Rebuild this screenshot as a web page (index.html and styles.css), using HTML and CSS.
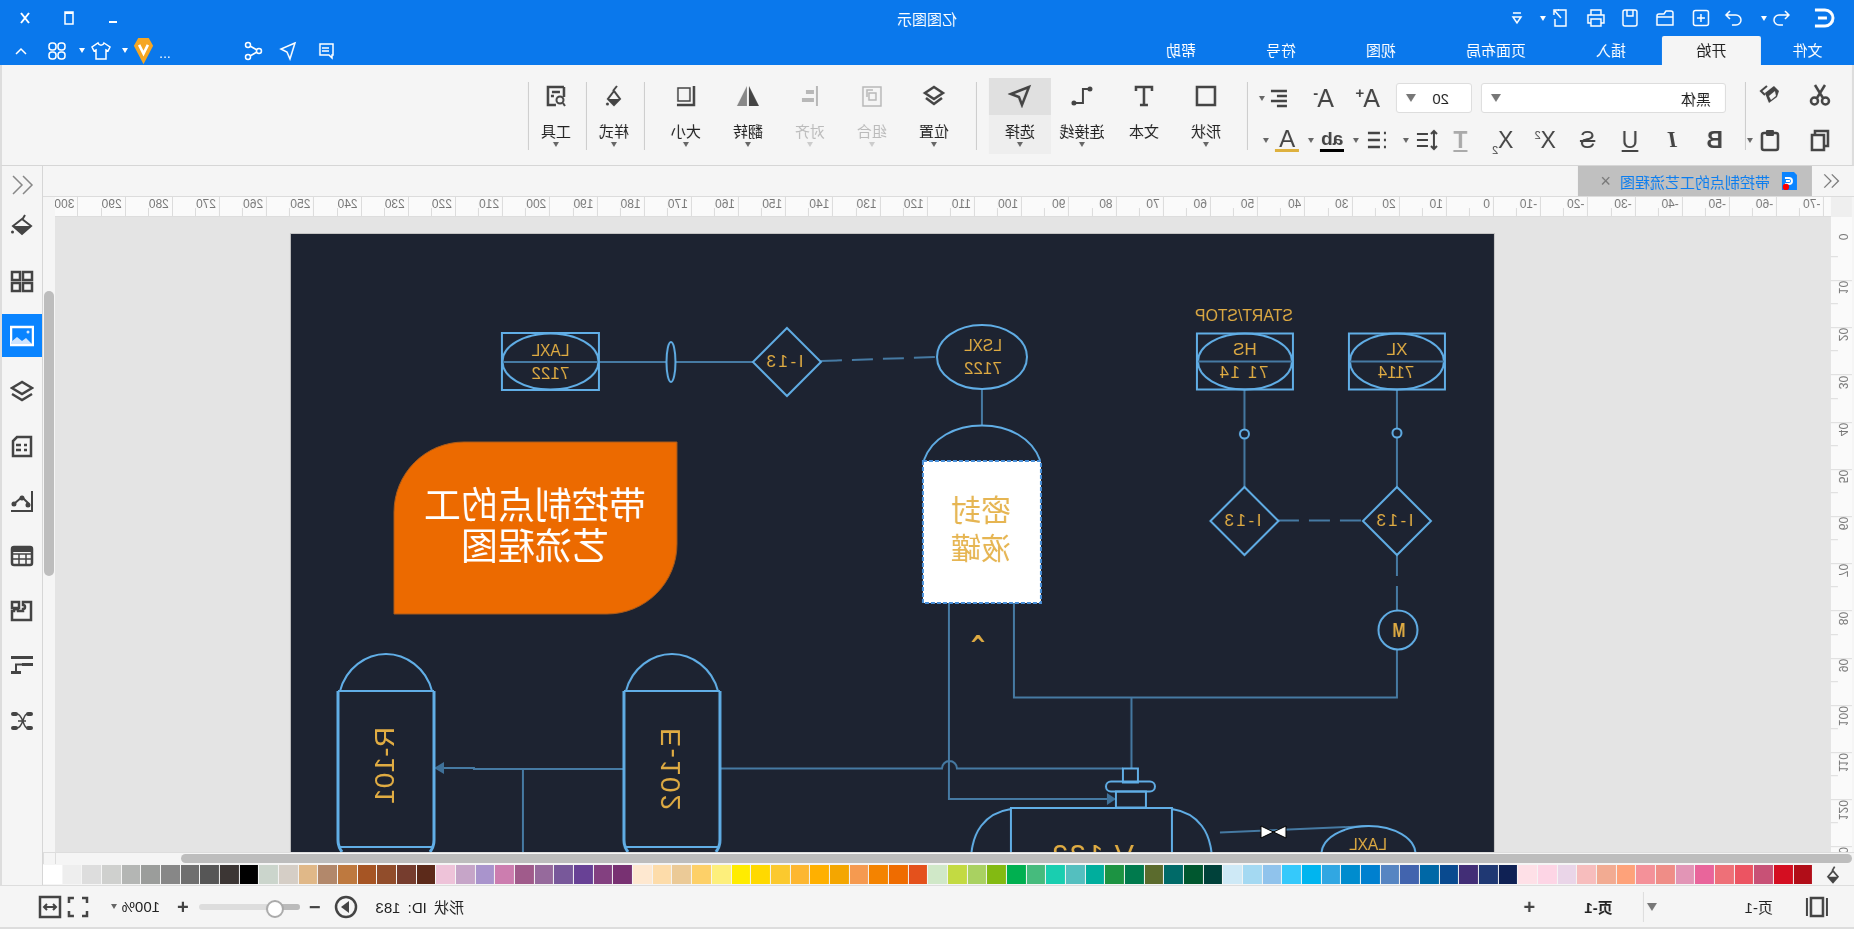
FILE: index.html
```html
<!DOCTYPE html>
<html lang="zh">
<head>
<meta charset="utf-8">
<title>亿图图示</title>
<link rel="stylesheet" href="styles.css">
</head>
<body>
<div class="app">
  <header class="titlebar">
    <div class="quick">
      <svg class="q24" viewBox="0 0 24 24"><path class="s w3" d="M21 4H11a8 8 0 0 0 0 16h10"/><path class="s w3" d="M9 12h9"/></svg>
      <svg class="q20" viewBox="0 0 20 20"><path class="s" d="M6 3L2 7l4 4M2 7h10a5 5 0 0 1 0 10H8"/></svg>
      <i class="caret light"></i>
      <b></b>
      <svg class="q20" viewBox="0 0 20 20"><path class="s" d="M14 3l4 4-4 4M18 7H8a5 5 0 0 0 0 10h4"/></svg>
      <svg class="q20" viewBox="0 0 20 20"><rect class="s" x="2.5" y="2.5" width="15" height="15" rx="2"/><path class="s" d="M10 6v8M6 10h8"/></svg>
      <svg class="q20" viewBox="0 0 20 20"><path class="s" d="M2 17V5a2 2 0 0 1 2-2h5l2 3h5a2 2 0 0 1 2 2v9z"/><path class="s" d="M2 9h16"/></svg>
      <svg class="q20" viewBox="0 0 20 20"><rect class="s" x="3" y="2" width="14" height="16" rx="2"/><path class="s" d="M7 2v6h6V2"/></svg>
      <svg class="q20" viewBox="0 0 20 20"><path class="s" d="M5 7V2h10v5M5 15H2V7h16v8h-3"/><rect class="s" x="5" y="11" width="10" height="7"/></svg>
      <svg class="q20" viewBox="0 0 20 20"><path class="s" d="M12 2H4v16h11v-7"/><path class="s" d="M9 10l6-7M11 2h5v5"/></svg>
      <i class="caret light"></i>
      <svg class="q14" viewBox="0 0 14 14"><path class="s" d="M3 2h8M3 6l4 6 4-6z"/></svg>
    </div>
    <div class="apptitle">亿图图示</div>
    <div class="winctl">
      <svg class="q14" viewBox="0 0 14 14"><path class="s w2" d="M3 11h8"/></svg>
      <svg class="q14" viewBox="0 0 14 14"><rect class="s" x="3" y="1" width="8" height="12"/><path class="s w2" d="M3 2h8"/></svg>
      <svg class="q14" viewBox="0 0 14 14"><path class="s w2" d="M3 2l8 10M11 2L3 12"/></svg>
    </div>
  </header>

  <nav class="tabbar">
    <span class="tab first">文件</span>
    <span class="tab active">开始</span>
    <span class="tab">插入</span>
    <span class="tab">页面布局</span>
    <span class="tab">视图</span>
    <span class="tab">符号</span>
    <span class="tab">帮助</span>
    <div class="tabtools">
      <svg class="q20" viewBox="0 0 20 20"><path class="s" d="M3 3h13v11H7l-3 3v-3H3zM7 7h7M7 10h7"/></svg>
      <svg class="q20" viewBox="0 0 20 20"><path class="s" d="M3 2l14 6-6 3-3 7z"/></svg>
      <svg class="q20" viewBox="0 0 20 20"><circle class="s" cx="4" cy="10" r="2.5"/><circle class="s" cx="15" cy="4" r="2.5"/><circle class="s" cx="15" cy="16" r="2.5"/><path class="s" d="M6 9l7-4M6 11l7 4"/></svg>
      <b></b>
      <span class="dots">...</span>
      <svg class="badge" viewBox="0 0 22 32"><path class="gold" d="M5 1h12l5 9-11 21L0 10z"/><path class="s w3" d="M6 9l5 10 5-10"/></svg>
      <i class="caret light"></i>
      <svg class="q20" viewBox="0 0 20 20"><path class="s" d="M7 2L1 6l2 4 2-1v9h10V9l2 1 2-4-6-4c-1 3-5 3-6 0z"/></svg>
      <i class="caret light"></i>
      <svg class="q20" viewBox="0 0 20 20"><rect class="s" x="2" y="2" width="7" height="7" rx="3"/><rect class="s" x="11" y="2" width="7" height="7" rx="3"/><rect class="s" x="2" y="11" width="7" height="7" rx="3"/><rect class="s" x="11" y="11" width="7" height="7" rx="3"/></svg>
      <svg class="q14" viewBox="0 0 14 14"><path class="s" d="M2 10l5-5 5 5"/></svg>
    </div>
  </nav>

  <section class="ribbon">
    <div class="clip">
      <svg class="ic" viewBox="0 0 24 24"><circle class="s w25" cx="6.500" cy="18" r="3.500"/><circle class="s w25" cx="17.500" cy="18" r="3.500"/><path class="s w25" d="M9 15L17 2M15 15L7 2"/></svg>
      <svg class="ic" viewBox="0 0 24 24"><path class="f" d="M8 3L17 10 13 20 5 14 3 8z"/><path class="s w2" d="M15 3l6 5-4 4"/><path class="clearf" d="M7 8l6 5-2 4-5-4z"/></svg>
      <svg class="ic" viewBox="0 0 24 24"><rect class="s w25" x="4" y="3" width="13" height="15"/><rect class="s w25 paperfill" x="8" y="7" width="12" height="15"/></svg>
      <div class="pastewrap">
        <svg class="ic" viewBox="0 0 24 24"><rect class="s w25" x="4" y="5" width="16" height="17" rx="2"/><rect class="f" x="8" y="2" width="8" height="6" rx="1"/></svg>
        <i class="caret"></i>
      </div>
    </div>
    <i class="sep"></i>
    <div class="fontgrp">
      <div class="frow1">
        <div class="select fname"><span>黑体</span><i class="caret big"></i></div>
        <div class="select fsize"><span>20</span><i class="caret big"></i></div>
        <span class="glyph aplus">A<sup>+</sup></span>
        <span class="glyph aminus">A<sup>-</sup></span>
        <svg class="ic alignic" viewBox="0 0 24 24"><path class="s w25" d="M4 5h16M4 10h10M4 15h16M4 20h10"/></svg>
        <i class="caret gapc"></i>
      </div>
      <div class="frow2">
        <span class="rb b">B</span>
        <span class="rb it">I</span>
        <span class="rb u">U</span>
        <span class="rb st">S</span>
        <span class="rb sc">X<sup>2</sup></span>
        <span class="rb sc">X<sub>2</sub></span>
        <span class="rb dis">T</span>
        <div class="rc w50"><svg class="ic" viewBox="0 0 24 24"><path class="s w2" d="M5 3v18M2 6l3-3 3 3M2 18l3 3 3-3M11 6h11M11 12h11M11 18h11"/></svg><i class="caret"></i></div>
        <div class="rc w45"><svg class="ic" viewBox="0 0 24 24"><path class="s w25" d="M9 5h12M9 12h12M9 19h12M3 5h2M3 12h2M3 19h2"/></svg><i class="caret"></i></div>
        <div class="rc w45"><span class="ab">ab</span><i class="caret"></i></div>
        <div class="rc w43"><span class="acol">A</span><i class="caret"></i></div>
      </div>
    </div>
    <i class="sep"></i>
    <div class="bbs lead">
      <div class="bb"><svg class="ic" viewBox="0 0 24 24"><rect class="s w25" x="3" y="3" width="18" height="18"/></svg><span>形状</span><i class="caret"></i></div>
      <div class="bb"><svg class="ic" viewBox="0 0 24 24"><path class="s w25" d="M4 7V3h16v4M12 3v18M8 21h8"/></svg><span>文本</span><i class="caret none"></i></div>
      <div class="bb"><svg class="ic" viewBox="0 0 24 24"><path class="s w2" d="M4 5h7v14h9"/><circle class="f" cx="4" cy="5" r="2.5"/><circle class="f" cx="20" cy="19" r="2.5"/></svg><span>连接线</span><i class="caret"></i></div>
      <div class="bb on"><svg class="ic" viewBox="0 0 24 24"><path class="s w25" d="M3 3l18 7-8 3-3 8z"/></svg><span>选择</span><i class="caret"></i></div>
    </div>
    <i class="sep sepwide"></i>
    <div class="bbs">
      <div class="bb"><svg class="ic" viewBox="0 0 24 24"><path class="s w25" d="M12 3l9 6-9 6-9-6zM4 14l8 6 8-6"/></svg><span>位置</span><i class="caret"></i></div>
      <div class="bb off"><svg class="ic" viewBox="0 0 24 24"><rect class="s" x="3" y="3" width="18" height="19"/><path class="s" d="M8 9h7v7H8zM11 6h6v7"/></svg><span>组合</span><i class="caret"></i></div>
      <div class="bb off"><svg class="ic" viewBox="0 0 24 24"><path class="s w2" d="M5 2v20"/><path class="f" d="M8 6h8v4H8zM8 14h12v4H8z"/></svg><span>对齐</span><i class="caret"></i></div>
      <div class="bb"><svg class="ic" viewBox="0 0 24 24"><path class="f" d="M11 2v20H1z"/><path class="f lite" d="M13 2v20h10z"/></svg><span>翻转</span><i class="caret"></i></div>
      <div class="bb"><svg class="ic" viewBox="0 0 24 24"><path class="s w25" d="M4 2v19h17"/><rect class="s" x="8" y="4" width="12" height="13"/></svg><span>大小</span><i class="caret"></i></div>
    </div>
    <i class="sep sepl"></i>
    <div class="bb narrow"><svg class="ic" viewBox="0 0 24 24"><path class="s w2" d="M9 2l4 5M12 7l6 8-6 6-6-6z"/><path class="f" d="M6 15h12l-6 6z"/><circle class="f" cx="18.500" cy="20" r="1.500"/></svg><span>样式</span><i class="caret"></i></div>
    <i class="sep"></i>
    <div class="bb narrow"><svg class="ic" viewBox="0 0 24 24"><path class="s w25" d="M4 3h16v18H12M4 3v10M8 8h8M14 12h3"/><circle class="s w2" cx="8" cy="16" r="3.500"/><path class="s w2" d="M5 19l-2 3"/></svg><span>工具</span><i class="caret"></i></div>
    <i class="sep"></i>
  </section>

  <div class="mainrow">
    <div class="content">
      <div class="docbar">
        <svg class="chev" viewBox="0 0 24 24"><path class="s" d="M11 4l-8 8 8 8M20 4l-8 8 8 8"/></svg>
        <div class="doctab">
          <svg class="docicon" viewBox="0 0 15 18"><path class="blue" d="M3 0h12v18H0V3z"/><path class="s w2 wht" d="M12 6H8a3 3 0 0 0 0 6h4M7 9h4"/><circle class="red" cx="11" cy="15" r="3.200"/></svg>
          <span class="docname">带控制点的工艺流程图</span>
          <span class="docx">×</span>
        </div>
      </div>

      <div class="rulerrow">
        <div class="corner"></div>
        <div class="hruler">
          <span>-70</span><span>-60</span><span>-50</span><span>-40</span><span>-30</span><span>-20</span><span>-10</span><span>0</span><span>10</span><span>20</span><span>30</span><span>40</span><span>50</span><span>60</span><span>70</span><span>80</span><span>90</span><span>100</span><span>110</span><span>120</span><span>130</span><span>140</span><span>150</span><span>160</span><span>170</span><span>180</span><span>190</span><span>200</span><span>210</span><span>220</span><span>230</span><span>240</span><span>250</span><span>260</span><span>270</span><span>280</span><span>290</span><span>300</span>
        </div>
        <div class="rulerend"></div>
      </div>

      <div class="canvasrow">
        <div class="vruler">
          <span>0</span><span>10</span><span>20</span><span>30</span><span>40</span><span>50</span><span>60</span><span>70</span><span>80</span><span>90</span><span>100</span><span>110</span><span>120</span><span>130</span>
        </div>
        <div class="canvas">
          <svg class="page" width="1203" height="640" viewBox="0 0 1203 640">
            <rect width="1203" height="640" class="pagebg"/>
            <g transform="matrix(-1 0 0 1 1494 -234)">
              <path class="ln" d="M599 362H667M676 362H754M982 389V425M1244.500 389V429M1244.500 439V487M1397 389V428M1397 438V487M1397 555V576M1397 586V610M1397 650V697.500H1014V603M949 603V799H1108M1131.500 697V768M443 768H474V769H624M523 769V860M720.500 768.500H942A7.500 7.500 0 0 1 957 768.500H1123M1220 832.500L1370 826"/>
              <path class="ln" d="M821 361L937 357" stroke-dasharray="21 10"/>
              <path class="ln" d="M1278 520.500H1363" stroke-dasharray="21 10"/>
              <path class="head" d="M434 768L444 762V774ZM1116 799L1107 793V805Z"/>

              <path class="sh" d="M502 333h97v57h-97z"/>
              <ellipse class="sh" cx="550.500" cy="361.500" rx="48" ry="28"/>
              <path class="ln" d="M503 362H598"/>
              <ellipse class="sh" cx="671" cy="362" rx="4.500" ry="20"/>
              <path class="sh" d="M787 328L821 362L787 396L753 362Z"/>
              <ellipse class="sh" cx="982" cy="357" rx="45" ry="32"/>
              <path class="sh" d="M924 460C932 438 955 425.500 982 425.500S1032 438 1040 460"/>
              <path class="orange" d="M677 442V544A70 70 0 0 1 607 614H394V512A70 70 0 0 1 464 442Z"/>
              <rect class="sel" x="923" y="461" width="118" height="142"/>

              <rect class="sh" x="1197" y="333.500" width="96" height="56"/>
              <ellipse class="sh" cx="1245" cy="361.500" rx="47" ry="28"/>
              <path class="ln" d="M1198 361.500H1292"/>
              <rect class="sh" x="1349" y="333.500" width="96" height="56"/>
              <ellipse class="sh" cx="1397" cy="361.500" rx="47" ry="28"/>
              <path class="ln" d="M1350 361.500H1444"/>
              <circle class="sh" cx="1244.500" cy="434" r="4.500"/>
              <circle class="sh" cx="1397" cy="433" r="4.500"/>
              <path class="sh" d="M1244.500 487L1278.500 521L1244.500 555L1210.500 521Z"/>
              <path class="sh" d="M1397 487L1431 521L1397 555L1363 521Z"/>
              <circle class="sh" cx="1398" cy="630" r="19.500"/>

              <path class="sh" d="M340 691C346 668 366 654 386 654S426 668 432 691"/>
              <path class="sh2" d="M338 691V840Q338 847 342 852M434 691V840Q434 847 430 852"/>
              <path class="sh" d="M338 691H434M340 847H432"/>
              <path class="sh" d="M626 691C632 668 652 654 672 654S712 668 718 691"/>
              <path class="sh2" d="M624 691V840Q624 847 628 852M720 691V840Q720 847 716 852"/>
              <path class="sh" d="M624 691H720M626 847H718"/>

              <rect class="sh" x="1123" y="768.500" width="15" height="14"/>
              <rect class="sh" x="1106" y="781.500" width="49" height="10" rx="5"/>
              <rect class="sh" x="1116" y="791.500" width="30" height="16"/>
              <path class="sh" d="M1011 880V808H1172V880M1011 809C985 813 971 832 971 862M1172 809C1198 813 1212 832 1212 862"/>
              <ellipse class="sh" cx="1368.500" cy="854" rx="47" ry="28"/>
              <path class="tie" d="M1261 826L1286 838V826L1261 838Z"/>
            </g>
            <g transform="translate(0 -234)">
              <text class="t" x="943.500" y="356" textLength="38" lengthAdjust="spacingAndGlyphs">LAXL</text>
              <text class="t" x="943.500" y="379">7122</text>
              <text class="t" x="709" y="367" textLength="37">I-13</text>
              <text class="t" x="511" y="351" textLength="38" lengthAdjust="spacingAndGlyphs">LSXL</text>
              <text class="t" x="511" y="374">7122</text>
              <text class="t" x="250" y="321" textLength="98" lengthAdjust="spacingAndGlyphs">START/STOP</text>
              <text class="t" x="249" y="355">HS</text>
              <text class="t" x="250" y="378" textLength="49">71 14</text>
              <text class="t" x="97" y="355">XL</text>
              <text class="t" x="98" y="378">7114</text>
              <text class="t" x="251" y="526" textLength="37">I-13</text>
              <text class="t" x="99" y="526" textLength="37">I-13</text>
              <text class="t m" x="95" y="637" textLength="13" lengthAdjust="spacingAndGlyphs">M</text>
              <text class="cgl" x="516" y="653">^</text>
              <text class="t big" x="401" y="865" textLength="82">V-132</text>
              <text class="t" x="126" y="850" textLength="38" lengthAdjust="spacingAndGlyphs">LAXL</text>
              <text class="t vert" transform="translate(1110 765.500) rotate(90)" dy=".36em" textLength="77">R-101</text>
              <text class="t vert" transform="translate(824 769) rotate(90)" dy=".36em" textLength="82">E-102</text>
              <text class="cn tank" x="513" y="521">密封</text>
              <text class="cn tank" x="513" y="559">液罐</text>
              <text class="cn head1" x="959" y="519">带控制点的工</text>
              <text class="cn head1" x="959" y="560">艺流程图</text>
            </g>
          </svg>
        </div>
        <div class="vscroll"><div class="vthumb"></div></div>
      </div>

      <div class="hscrollrow">
        <div class="htrack"><div class="hthumb"></div></div>
        <div class="hbox"></div>
      </div>

      <div class="palrow">
        <svg class="palicon" viewBox="0 0 24 24"><path class="s w2" d="M10 2l3 5M12 7l6 7-6 7-6-7z"/><path class="f" d="M6 14h12l-6 7z"/></svg>
        <div class="swatches">
          <i style="background:#ffffff"></i><i style="background:#eeeeee"></i><i style="background:#dddddd"></i><i style="background:#cfd0ce"></i><i style="background:#b4b6b4"></i><i style="background:#9b9d9b"></i><i style="background:#878787"></i><i style="background:#6f6f6f"></i><i style="background:#565656"></i><i style="background:#3c3634"></i><i style="background:#000000"></i><i style="background:#cbd5cc"></i><i style="background:#d5cec6"></i><i style="background:#e0b888"></i><i style="background:#b2886b"></i><i style="background:#be793f"></i><i style="background:#a65524"></i><i style="background:#914d2b"></i><i style="background:#763d2e"></i><i style="background:#5c2a1a"></i><i style="background:#eec3d9"></i><i style="background:#c6a5c8"></i><i style="background:#a994cc"></i><i style="background:#cc7daf"></i><i style="background:#a05b8b"></i><i style="background:#966a9c"></i><i style="background:#78589a"></i><i style="background:#684195"></i><i style="background:#834080"></i><i style="background:#783172"></i><i style="background:#fee8d0"></i><i style="background:#fddcaa"></i><i style="background:#ebca97"></i><i style="background:#fdd068"></i><i style="background:#fdef7c"></i><i style="background:#ffec00"></i><i style="background:#ffd900"></i><i style="background:#fbc92e"></i><i style="background:#fdb731"></i><i style="background:#ffb000"></i><i style="background:#f4a600"></i><i style="background:#f59a50"></i><i style="background:#f48300"></i><i style="background:#ef6c00"></i><i style="background:#e4511c"></i><i style="background:#d0e8c8"></i><i style="background:#c3da42"></i><i style="background:#a9d161"></i><i style="background:#83ba12"></i><i style="background:#00b050"></i><i style="background:#46bb7d"></i><i style="background:#19ceb0"></i><i style="background:#54bfbf"></i><i style="background:#00ae9d"></i><i style="background:#1c9342"></i><i style="background:#007a4d"></i><i style="background:#5b6b2d"></i><i style="background:#006a68"></i><i style="background:#00572f"></i><i style="background:#00413a"></i><i style="background:#cee9f6"></i><i style="background:#a4d9f2"></i><i style="background:#90c3ec"></i><i style="background:#35c9fb"></i><i style="background:#00b5ef"></i><i style="background:#31a7e2"></i><i style="background:#008cce"></i><i style="background:#0080cf"></i><i style="background:#5685c2"></i><i style="background:#4264ae"></i><i style="background:#0068a6"></i><i style="background:#094a8f"></i><i style="background:#422e76"></i><i style="background:#1f3873"></i><i style="background:#0f2154"></i><i style="background:#fee0e7"></i><i style="background:#fdd5e5"></i><i style="background:#ead5e8"></i><i style="background:#f7bdbd"></i><i style="background:#f2ab92"></i><i style="background:#fea27a"></i><i style="background:#f49199"></i><i style="background:#ef8d87"></i><i style="background:#e295b6"></i><i style="background:#e9659b"></i><i style="background:#ee7078"></i><i style="background:#ec5462"></i><i style="background:#c85176"></i><i style="background:#d40e21"></i><i style="background:#b10d18"></i>
        </div>
      </div>
    </div>

    <aside class="sidebar">
      <svg class="sidechev" viewBox="0 0 24 24"><path class="s" d="M11 3l-9 9 9 9M21 3l-9 9 9 9"/></svg>
      <div class="sb"><svg class="ic" viewBox="0 0 24 24"><path class="s w2" d="M9 1l3 5M12 5l9 7-9 8-9-8z"/><path class="f" d="M3 12h18l-9 8z"/><circle class="f" cx="21.500" cy="18" r="1.500"/></svg></div>
      <div class="sb"><svg class="ic" viewBox="0 0 24 24"><rect class="s w25" x="2" y="3" width="9" height="8"/><rect class="s w25" x="14" y="3" width="8" height="8"/><rect class="s w25" x="2" y="14" width="9" height="8"/><rect class="s w25" x="14" y="14" width="8" height="8"/></svg></div>
      <div class="sb act"><svg class="ic" viewBox="0 0 24 24"><rect class="s w25 wht" x="1" y="3" width="22" height="18"/><path class="wfill" d="M2 20l6-6 4 3 5-4 6 5v2z"/><circle class="wfill" cx="6" cy="8" r="1.500"/></svg></div>
      <div class="sb"><svg class="ic" viewBox="0 0 24 24"><path class="s w25" d="M12 3l10 6-10 6L2 9zM2 15l10 6 10-6"/></svg></div>
      <div class="sb"><svg class="ic" viewBox="0 0 24 24"><path class="s w25" d="M3 3h14l4 4v15H3zM7 11h3M13 11h5M7 16h3M13 16h5"/></svg></div>
      <div class="sb"><svg class="ic" viewBox="0 0 24 24"><path class="s w2" d="M2 2v20h21M5 15l7-7 7 6"/><circle class="f" cx="6" cy="16" r="2.500"/><circle class="f" cx="12" cy="9" r="2.500"/><circle class="f" cx="20" cy="15" r="2.500"/></svg></div>
      <div class="sb"><svg class="ic" viewBox="0 0 24 24"><rect class="s w25" x="2" y="3" width="20" height="18" rx="2"/><path class="f" d="M3 3h18v5H3z"/><path class="s" d="M2 10h20M2 15h20M8 10v11M15 10v11"/></svg></div>
      <div class="sb"><svg class="ic" viewBox="0 0 24 24"><path class="s w25" d="M3 3h8v3a2 2 0 0 0 0 4v2h5a2 2 0 0 1 4 0h2v9H3zM15 3h7v6h-7z"/></svg></div>
      <div class="sb"><svg class="ic" viewBox="0 0 24 24"><path class="f" d="M1 2h22v3H1zM1 9h11v3H1zM13 17h10v3H13z"/><path class="s w2" d="M11 10.500H18V18"/></svg></div>
      <div class="sb"><svg class="ic" viewBox="0 0 24 24"><rect class="f" x="1" y="3" width="7" height="4" rx="2"/><rect class="f" x="16" y="3" width="7" height="4" rx="2"/><rect class="f" x="1" y="17" width="7" height="4" rx="2"/><rect class="f" x="16" y="17" width="7" height="4" rx="2"/><path class="s" d="M7 5c4 0 4 14 10 14M17 5c-6 0-6 14-10 14M8 12h8"/></svg></div>
    </aside>
  </div>

  <footer class="status">
    <svg class="ic pageic" viewBox="0 0 24 24"><path class="s w2" d="M2 3v18M22 3v18"/><rect class="s w25" x="6" y="3" width="12" height="18"/></svg>
    <span class="pg">页-1</span>
    <i class="caret big pgcaret"></i>
    <i class="pgsep"></i>
    <span class="pg bold">页-1</span>
    <span class="plus first">+</span>
    <div class="statright">
      <span class="shapeid">形状 ID: 183</span>
      <svg class="ic play" viewBox="0 0 24 24"><circle class="s w25" cx="12" cy="12" r="10"/><path class="f" d="M9 6l8 6-8 6z"/></svg>
      <span class="plus minus">−</span>
      <div class="slider"><div class="fill"></div></div>
      <span class="plus">+</span>
      <span class="zoom">100%</span>
      <i class="caret"></i>
      <svg class="ic full" viewBox="0 0 24 24"><path class="s w25" d="M3 8V3h5M16 3h5v5M21 16v5h-5M8 21H3v-5"/></svg>
      <svg class="ic fit" viewBox="0 0 24 24"><rect class="s w25" x="2" y="2" width="20" height="20"/><path class="s w2" d="M6 12h12M9 9l-3 3 3 3M15 9l3 3-3 3"/></svg>
    </div>
  </footer>
  <div class="footline"></div>
</div>
</body>
</html>
```

FILE: styles.css
```css
* { box-sizing: border-box; }
html, body { margin: 0; height: 100%; overflow: hidden; background: #f5f5f5; }
body { font-family: "Liberation Sans", "Noto Sans CJK SC", sans-serif; font-size: 15px; color: #222; }
i { display: block; font-style: normal; }

.app { width: 1854px; height: 929px; display: flex; flex-direction: column; transform: scaleX(-1); overflow: hidden; }

/* shared icon primitives */
.s { fill: none; stroke: currentColor; stroke-width: 1.5; }
.f { fill: currentColor; }
.w2 { stroke-width: 2; }
.w25 { stroke-width: 2.5; }
.w3 { stroke-width: 3; }
.wht { color: #fff; }
.paperfill { fill: #f5f5f5; }
.ic { width: 24px; height: 24px; color: #444; display: block; flex: none; }
.q14 { width: 14px; height: 14px; color: #fff; }
.q20 { width: 20px; height: 20px; color: #fff; }
.q24 { width: 24px; height: 24px; color: #fff; }
.caret { width: 0; height: 0; border-left: 3.5px solid transparent; border-right: 3.5px solid transparent; border-top: 5px solid #666; flex: none; }
.caret.big { border-left-width: 5px; border-right-width: 5px; border-top-width: 8px; border-top-color: #777; }
.caret.light { border-top-color: #fff; }
.caret.none { border-top-color: transparent; }

/* title bar */
.titlebar { height: 36px; background: #0a78ec; color: #fff; display: grid; grid-template-columns: 1fr auto 1fr; align-items: center; }
.quick { display: grid; grid-template-columns: 60px 26px 8px 8px 36px 30px 42px 28px 40px 32px 2px 50px; justify-items: center; align-items: center; }
.apptitle { font-size: 15px; }
.winctl { display: flex; justify-content: flex-end; padding-right: 3px; }
.winctl svg { width: 44px; height: 14px; }

/* tabs */
.tabbar { height: 29px; background: #0a78ec; color: #fff; display: flex; align-items: stretch; }
.tab { padding: 0 35px; line-height: 29px; font-size: 15px; white-space: nowrap; }
.tab.first { padding: 0 31.5px; }
.tab.active { background: #f5f5f5; color: #222; border-radius: 2px 2px 0 0; padding: 0 34.5px; margin-right: 1px; }
.tabtools { margin-left: auto; padding-right: 6px; display: grid; grid-template-columns: 36px 40px 30px 62px 22px 20px 18px 30px 8px 42px 30px; justify-items: center; align-items: center; }
.dots { font-size: 14px; line-height: 14px; margin-top: 4px; }
.badge { width: 21px; height: 28px; }
.gold { fill: #f5a623; }

/* ribbon */
.ribbon { height: 101px; background: #f5f5f5; border-bottom: 1px solid #d6d6d6; border-right: 2px solid #ddd; border-left: 2px solid #ddd; display: flex; align-items: flex-start; }
.sep { width: 1px; height: 68px; background: #ccc; margin-top: 17px; flex: none; }
.sepwide { margin-left: 12px; margin-right: 11px; }
.sepl { margin-left: 10px; }
.clip { width: 106px; margin-top: 18px; padding-left: 20px; display: grid; grid-template-columns: 50px 50px; row-gap: 21px; align-items: start; justify-items: start; }
.clearf { fill: #f5f5f5; }
.pastewrap { display: flex; align-items: center; gap: 5px; }
.fontgrp { width: 497px; margin-top: 18px; flex: none; }
.frow1 { display: flex; align-items: center; height: 30px; padding-left: 19px; }
.select { height: 30px; background: #fff; border: 1px solid #ddd; border-radius: 3px; display: flex; align-items: center; justify-content: space-between; padding: 0 9px 0 14px; flex: none; }
.fname { width: 245px; }
.fsize { width: 76px; margin-left: 9px; padding-left: 22px; }
.glyph { font-size: 25px; line-height: 30px; color: #444; width: 24px; white-space: nowrap; font-family: "Liberation Sans", sans-serif; }
.glyph sup { font-size: 15px; font-weight: 700; line-height: 0; vertical-align: 9px; margin-left: -1px; }
.aplus { margin-left: 16px; }
.aminus { margin-left: 22px; }
.alignic { margin-left: 19px; }
.gapc { margin-left: 2px; }
.frow2 { display: flex; align-items: center; height: 24px; margin-top: 15px; padding-left: 9px; }
.rb { width: 42.4px; text-align: center; font-size: 23px; line-height: 24px; color: #444; font-family: "Liberation Sans", sans-serif; flex: none; }
.rb.b { font-weight: 700; }
.rb.it { font-style: italic; font-family: "Liberation Serif", serif; font-weight: 700; }
.rb.u { text-decoration: underline; text-underline-offset: 2px; text-decoration-thickness: 2px; }
.rb.st { text-decoration: line-through; text-decoration-thickness: 2px; }
.rb sup, .rb sub { font-size: 11px; line-height: 0; }
.rb.dis { color: #aaa; font-weight: 700; text-decoration: underline; text-underline-offset: 2px; }
.rc { display: flex; align-items: center; flex: none; }
.rc .caret { margin-left: 6px; }
.w50 { width: 50px; } .w45 { width: 45px; } .w43 { width: 43px; }
.ab { width: 24px; font-size: 19px; font-weight: 700; line-height: 20px; color: #444; text-align: center; border-bottom: 3px solid #000; }
.acol { width: 24px; font-size: 24px; line-height: 21px; color: #444; text-align: center; border-bottom: 3px solid #deb13e; }
.bbs { display: flex; flex: none; margin-top: 13px; }
.lead { margin-left: 10px; }
.bb { width: 62px; height: 76px; display: flex; flex-direction: column; align-items: center; flex: none; font-size: 15px; color: #222; }
.bb .ic { margin-top: 6px; }
.bb span { line-height: 20px; margin-top: 14px; white-space: nowrap; }
.bb.on { background: linear-gradient(#e0e0e0 37px, #eeeeee 37px); }
.bb.off { color: #bbb; }
.bb.off .ic { color: #b8b8b8; }
.bb.off .caret { border-top-color: #ccc; }
.lite { color: #888; }
.narrow { width: 57px; margin-top: 13px; padding-left: 3px; }

/* main */
.mainrow { flex: 1; display: flex; min-height: 0; }
.content { flex: 1; min-width: 0; display: flex; flex-direction: column; }
.docbar { height: 31px; flex: none; border-bottom: 1px solid #dcdcdc; display: flex; align-items: stretch; padding-left: 3px; background: #f5f5f5; }
.chev { width: 24px; height: 20px; margin: 5px 7px 0 8px; color: #777; flex: none; }
.doctab { width: 234px; background: #c0c0c0; display: flex; align-items: center; padding-left: 15px; }
.docicon { width: 15px; height: 18px; flex: none; }
.blue { fill: #0a84ff; }
.red { fill: #f00; }
.docname { margin-left: 12px; color: #0a7df0; font-size: 15px; white-space: nowrap; }
.docx { margin-left: 9px; font-size: 18px; color: #777; line-height: 20px; }

.rulerrow { height: 20px; flex: none; display: flex; padding-left: 2px; }
.corner { width: 21px; height: 20px; background: #efefef; flex: none; }
.hruler { flex: 1; min-width: 0; display: flex; overflow: hidden; padding-left: 6.6px; background: #fafafa; border-bottom: 1px solid #ddd; }
.hruler span { flex: 0 0 47.2px; height: 19px; border-left: 1px solid #dcdcdc; padding-left: 3px; font-size: 12px; line-height: 14px; color: #777; background: linear-gradient(#dcdcdc, #dcdcdc) 23px 100% / 1px 8px no-repeat; }
.rulerend { width: 12px; flex: none; }

.canvasrow { flex: 1; min-height: 0; display: flex; padding-left: 2px; }
.vruler { width: 21px; flex: none; background: #fafafa; padding-top: 17px; overflow: hidden; display: flex; flex-direction: column; }
.vruler span { flex: 0 0 47.2px; border-top: 1px solid #dcdcdc; font-size: 12px; line-height: 18px; color: #777; writing-mode: vertical-rl; transform: rotate(180deg); transform-origin: center; text-align: right; padding: 0 0 0 2px; background: linear-gradient(#dcdcdc, #dcdcdc) 0 50% / 7px 1px no-repeat; }
.canvas { flex: 1; min-width: 0; background: #e4e4e4; overflow: hidden; padding: 17px 0 0 337px; }
.page { display: block; box-shadow: 0 0 0 1px #c4c4c4; }
.pagebg { fill: #1d2331; }
.vscroll { width: 12px; flex: none; padding-left: 1px; background: #f5f5f5; padding-top: 74px; }
.vthumb { width: 10px; height: 285px; background: #bdbdbd; border-radius: 5px; }

.ln { fill: none; stroke: #467aa3; stroke-width: 2; }
.sh { fill: none; stroke: #61aee6; stroke-width: 2; }
.sh2 { fill: none; stroke: #61aee6; stroke-width: 3; }
.head { fill: #3f7199; }
.orange { fill: #ec6a00; stroke: #a85b1c; stroke-width: 1; }
.sel { fill: #fff; stroke: #4a90d9; stroke-width: 2; stroke-dasharray: 4 2; }
.tie { fill: #fff; stroke: #000; stroke-width: 1; }
.t { font-family: "Liberation Sans", sans-serif; font-size: 17px; fill: #e0ac43; text-anchor: middle; }
.t.m { font-size: 21px; font-weight: 700; }
.t.big { font-size: 29px; }
.t.vert { font-size: 28px; }
.cgl { font-family: "DejaVu Sans Mono", monospace; font-size: 24px; fill: #e0ac43; text-anchor: middle; font-weight: 700; }
.cn { font-family: "Noto Sans CJK SC", sans-serif; text-anchor: middle; }
.tank { font-size: 30px; fill: #e6b552; }
.head1 { font-size: 37px; fill: #fff; }

.hscrollrow { height: 12px; flex: none; display: flex; padding-left: 2px; border-top: 1px solid #ddd; }
.htrack { flex: 1; min-width: 0; padding-top: 1px; }
.hthumb { width: 1671px; height: 9px; background: #bdbdbd; border-radius: 5px; }
.hbox { width: 13px; border-left: 1px solid #ddd; border-right: 1px solid #ddd; flex: none; }

.palrow { height: 21px; flex: none; display: flex; align-items: center; }
.palicon { width: 20px; height: 20px; margin: 0 10px 0 11px; color: #444; flex: none; }
.swatches { flex: 1; display: flex; flex-direction: row-reverse; height: 19px; gap: 1px; background: #f5f5f5; }
.swatches i { flex: 1; }

/* side rail */
.sidebar { width: 43px; flex: none; border-left: 1px solid #d6d6d6; border-right: 2px solid #ddd; background: #f5f5f5; display: flex; flex-direction: column; align-items: center; }
.sidechev { width: 24px; height: 24px; margin: 7px 0; color: #888; flex: none; }
.sb { width: 100%; height: 43px; margin-bottom: 12px; display: flex; align-items: center; justify-content: center; flex: none; }
.sb.act { background: #0a84ff; }
.sb.act .ic { color: #fff; }
.wfill { fill: #cfe4ff; }

/* status */
.status { height: 42px; flex: none; background: #f5f5f5; border-top: 1px solid #ddd; display: flex; align-items: center; padding: 0 37px 0 25px; font-size: 15px; }
.pg { margin-left: 32px; color: #222; white-space: nowrap; }
.pg.bold { font-weight: 700; margin-left: 30px; }
.pgcaret { margin-left: 88px; }
.pgsep { width: 1px; height: 30px; background: #ddd; margin-left: 3px; }
.plus { font-size: 20px; font-weight: 700; color: #444; line-height: 20px; width: 16px; text-align: center; flex: none; }
.plus.first { margin-left: 47px; }
.statright { margin-left: auto; display: flex; align-items: center; width: 427px; }
.shapeid { flex: none; width: 91px; white-space: nowrap; word-spacing: 3px; }
.play { margin-left: 15px; }
.minus { margin-left: 11px; }
.slider { width: 101px; height: 6px; background: #ddd; border-radius: 3px; margin-left: 7px; flex: none; }
.fill { width: 27px; height: 6px; background: #bbb; border-radius: 3px; position: relative; }
.fill::after { content: ""; position: absolute; right: -7px; top: -4px; width: 14px; height: 14px; border-radius: 50%; background: #fff; border: 2px solid #aaa; }
.status .plus:not(.minus):not(.first) { margin-left: 8px; }
.zoom { flex: none; margin-left: 15px; width: 37px; white-space: nowrap; }
.statright .caret { margin-left: 6px; }
.full { margin-left: 21px; }
.fit { margin-left: 4px; }
.footline { height: 2px; background: #ddd; flex: none; }
```
